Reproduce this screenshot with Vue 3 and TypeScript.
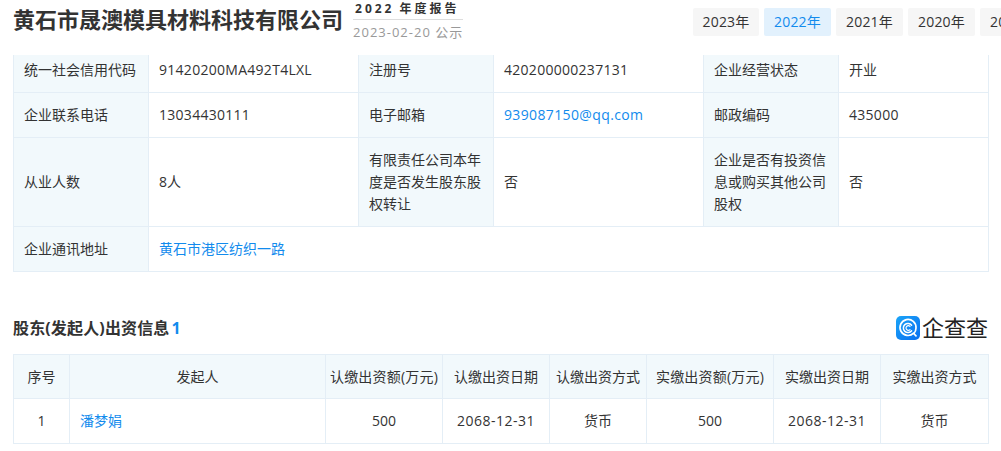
<script setup lang="ts">
const years = ['2023年', '2022年', '2021年', '2020年', '2019年']
const heads = ['序号', '发起人', '认缴出资额(万元)', '认缴出资日期', '认缴出资方式', '实缴出资额(万元)', '实缴出资日期', '实缴出资方式']
</script>

<template>
  <div class="page">
    <header class="top">
      <h1 class="name">黄石市晟澳模具材料科技有限公司</h1>
      <div class="report">
        <div class="report-title">2022 年度报告</div>
        <div class="report-date">2023-02-20 公示</div>
      </div>
      <nav class="tabs">
        <span v-for="y in years" :key="y" class="tab" :class="{ on: y === '2022年' }">{{ y }}</span>
      </nav>
    </header>

    <div class="clip">
      <table class="info">
        <colgroup>
          <col class="c1" /><col class="c2" /><col class="c1" /><col class="c2" /><col class="c1" /><col class="c3" />
        </colgroup>
        <tbody>
          <tr>
            <th>统一社会信用代码</th><td class="num">91420200MA492T4LXL</td>
            <th>注册号</th><td class="num">420200000237131</td>
            <th>企业经营状态</th><td>开业</td>
          </tr>
          <tr>
            <th>企业联系电话</th><td class="num">13034430111</td>
            <th>电子邮箱</th><td><a class="link mail">939087150@qq.com</a></td>
            <th>邮政编码</th><td class="num">435000</td>
          </tr>
          <tr>
            <th>从业人数</th><td>8人</td>
            <th>有限责任公司本年度是否发生股东股权转让</th><td>否</td>
            <th>企业是否有投资信息或购买其他公司股权</th><td>否</td>
          </tr>
          <tr>
            <th>企业通讯地址</th>
            <td colspan="5"><a class="link">黄石市港区纺织一路</a></td>
          </tr>
        </tbody>
      </table>
    </div>

    <section class="section">
      <div class="sec-head">
        <h2 class="sec-title">股东(发起人)出资信息<span class="count">1</span></h2>
        <div class="logo">
          <svg class="logo-mark" width="24" height="24" viewBox="0 0 24 24" aria-hidden="true">
            <defs>
              <linearGradient id="lg" x1="0" y1="0" x2="1" y2="1">
                <stop offset="0" stop-color="#1aa5f8" />
                <stop offset="1" stop-color="#0a6ff0" />
              </linearGradient>
            </defs>
            <rect width="24" height="24" rx="5" fill="url(#lg)" />
            <path d="M17.6 17.2A8 8 0 1 1 20 12c0 2.2-.8 4.2-2.2 5.6l2.2 2.2" fill="none" stroke="#fff" stroke-width="1.7" stroke-linecap="round" />
            <path d="M15.6 9.2A4.6 4.6 0 1 0 15.6 14.8" fill="none" stroke="#fff" stroke-width="1.5" stroke-linecap="round" />
            <path d="M14 10.4A2.3 2.3 0 1 0 14 13.6" fill="none" stroke="#fff" stroke-width="1.2" stroke-linecap="round" />
          </svg>
          <span class="logo-text">企查查</span>
        </div>
      </div>
      <table class="holders">
        <colgroup>
          <col class="h1" /><col class="h2" /><col class="h3" /><col class="h4" /><col class="h5" /><col class="h6" /><col class="h7" /><col class="h8" />
        </colgroup>
        <thead>
          <tr><th v-for="h in heads" :key="h" :class="{ wide: h.includes('(') }">{{ h }}</th></tr>
        </thead>
        <tbody>
          <tr>
            <td>1</td>
            <td class="left"><a class="link">潘梦娟</a></td>
            <td>500</td>
            <td class="date">2068-12-31</td>
            <td>货币</td>
            <td>500</td>
            <td class="date">2068-12-31</td>
            <td>货币</td>
          </tr>
        </tbody>
      </table>
    </section>
  </div>
</template>

<style>
html, body { margin: 0; background: #fff; }
</style>

<style scoped>
.page {
  width: 1001px;
  height: 451px;
  overflow: hidden;
  font-family: "Open Sans", "Noto Sans CJK SC", sans-serif;
  font-size: 14px;
  color: #333;
  background: #fff;
}
.top {
  height: 55px;
  display: flex;
  align-items: flex-start;
  padding-left: 13px;
  box-sizing: border-box;
  white-space: nowrap;
  overflow: hidden;
}
.name {
  margin: 3px 0 0;
  font-size: 22px;
  line-height: 32px;
  font-weight: 700;
  color: #333;
}
.report {
  margin-left: 10px;
  width: 110px;
  flex: none;
}
.report-title {
  height: 20px;
  box-sizing: border-box;
  border-bottom: 1px solid #ddd;
  font-size: 12px;
  line-height: 18px;
  font-weight: 700;
  letter-spacing: 3px;
  word-spacing: -1px;
  padding-left: 2px;
}
.report-date {
  margin-top: 3px;
  font-size: 13px;
  line-height: 18px;
  color: #999;
  letter-spacing: 1px;
}
.tabs {
  margin: 8px 0 0 auto;
  display: flex;
  gap: 5px;
  flex: none;
  width: 309px;
}
.tab {
  flex: none;
  width: 67px;
  height: 28px;
  line-height: 28px;
  text-align: center;
  background: #f6f6f6;
  border-radius: 2px;
  color: #333;
  letter-spacing: 0.2px;
}
.tab:first-child { width: 66px; margin-left: 1px; }
.tab.on { background: #e2f1fd; color: #128bed; }
.clip { height: 217px; overflow: hidden; }
table {
  border-collapse: collapse;
  table-layout: fixed;
  margin-left: 13px;
  width: 975px;
  font-weight: 400;
}
th, td {
  border: 1px solid #e4eef6;
  font-weight: 400;
  line-height: 22px;
  box-sizing: border-box;
}
.info { margin-top: -8px; }
.info th {
  background: #f2f9fc;
  text-align: left;
  padding: 11px 10px;
}
.info td { padding: 11px 10px; }
.info td.num { letter-spacing: 0.28px; }
.mail { letter-spacing: 0.37px; }
.c1 { width: 135px; }
.c2 { width: 210px; }
.c3 { width: 150px; }
.link { color: #128bed; }
.sec-head {
  height: 82px;
  display: flex;
  align-items: flex-start;
  justify-content: space-between;
  padding: 44px 13px 0;
  box-sizing: border-box;
}
.sec-title {
  margin: 0;
  font-size: 16px;
  line-height: 24px;
  font-weight: 700;
  color: #333;
  letter-spacing: 0.15px;
}
.count { color: #128bed; margin-left: 2px; }
.logo {
  display: flex;
  align-items: flex-start;
  gap: 2px;
  height: 24px;
}
.logo-mark { flex: none; }
.logo-text {
  font-size: 22px;
  line-height: 22px;
  font-weight: 400;
  color: #222;
}
.holders th {
  background: #f2f9fc;
  text-align: center;
  height: 44px;
  padding: 0;
}
.holders th.wide { letter-spacing: 0.2px; }
.holders td {
  text-align: center;
  height: 45px;
  padding: 0;
}
.holders td.date { letter-spacing: 0.5px; }
.holders td.left { text-align: left; padding-left: 10px; }
.h1 { width: 56px; }
.h2 { width: 256px; }
.h3 { width: 117px; }
.h4 { width: 107px; }
.h5 { width: 97px; }
.h6 { width: 127px; }
.h7 { width: 107px; }
.h8 { width: 108px; }
</style>
